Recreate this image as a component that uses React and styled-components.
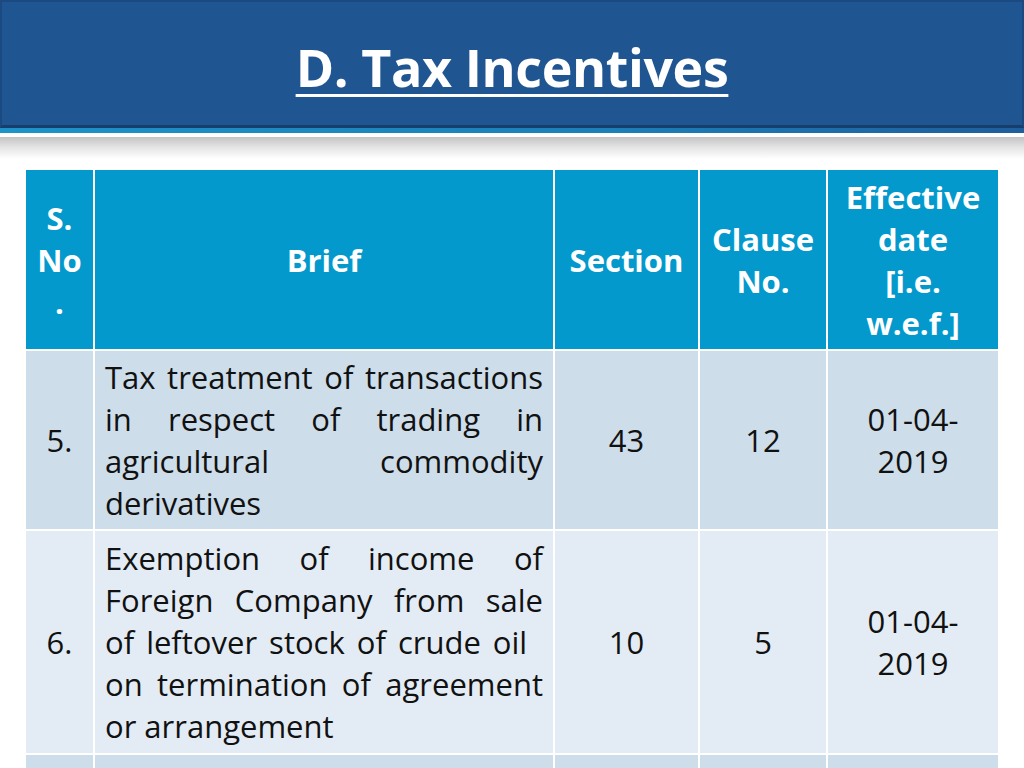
import styled, { createGlobalStyle } from 'styled-components';

const GlobalStyle = createGlobalStyle`
    html, body {
        margin: 0;
        padding: 0;
        background: #ffffff;
        overflow: hidden;
    }
    body {
        width: 1024px;
        height: 768px;
        font-family: "Open Sans", "Noto Sans", sans-serif;
    }
`

// each brief line: [text, justified?, extra word spacing]
const rows = [
    {
        no: '5.',
        brief: [
            ['Tax treatment of transactions', true],
            ['in respect of trading in', true],
            ['agricultural commodity', true],
            ['derivatives', false],
        ],
        section: '43',
        clause: '12',
        date: ['01-04-', '2019'],
    },
    {
        no: '6.',
        brief: [
            ['Exemption of income of', true],
            ['Foreign Company from sale', true],
            ['of leftover stock of crude oil', false, 4],
            ['on termination of agreement', true],
            ['or arrangement', false],
        ],
        section: '10',
        clause: '5',
        date: ['01-04-', '2019'],
    },
]

const App = () => {
    return (
        <Slide>
            <GlobalStyle />
            <TitleBar>
                <Title>D. Tax Incentives</Title>
            </TitleBar>
            <Stripe />
            <Shade />
            <TableWrap>
                <Table>
                    <colgroup>
                        <col style={{ width: 68 }} />
                        <col style={{ width: 460 }} />
                        <col style={{ width: 145 }} />
                        <col style={{ width: 128 }} />
                        <col style={{ width: 171 }} />
                    </colgroup>
                    <thead>
                        <tr>
                            <Th>S.<br />No<br />.</Th>
                            <Th>Brief</Th>
                            <Th>Section</Th>
                            <Th>Clause<br />No.</Th>
                            <Th>Effective<br />date<br />[i.e.<br />w.e.f.]</Th>
                        </tr>
                    </thead>
                    <tbody>
                        {rows.map((row, i) => (
                            <tr key={row.no}>
                                <Td shade={i % 2} height={i === 0 ? 180 : 224}>{row.no}</Td>
                                <BriefCell shade={i % 2}>
                                    {row.brief.map(([line, justify, spacing], j) => (
                                        <BriefLine key={j} justify={justify} spacing={spacing}>{line}</BriefLine>
                                    ))}
                                </BriefCell>
                                <Td shade={i % 2}>{row.section}</Td>
                                <Td shade={i % 2}>{row.clause}</Td>
                                <Td shade={i % 2}>{row.date[0]}<br />{row.date[1]}</Td>
                            </tr>
                        ))}
                        <tr>
                            <Td shade={0} height={60}></Td>
                            <Td shade={0}></Td>
                            <Td shade={0}></Td>
                            <Td shade={0}></Td>
                            <Td shade={0}></Td>
                        </tr>
                    </tbody>
                </Table>
            </TableWrap>
        </Slide>
    );
}

const Slide = styled.div`
    width: 1024px;
    height: 768px;
    overflow: hidden;
    display: flex;
    flex-direction: column;
    & > * { flex-shrink: 0; }
`

const TitleBar = styled.div`
    height: 128px;
    box-sizing: border-box;
    background: #1f5591;
    border: 2px solid #1a4a80;
    border-bottom: 3px solid #163f6d;
    display: flex;
    justify-content: center;
    align-items: flex-start;
`

const Title = styled.h1`
    margin: 30px 0 0;
    font-family: "Open Sans", "Noto Sans", sans-serif;
    font-size: 52px;
    font-weight: 700;
    line-height: 70px;
    color: #ffffff;
    text-decoration: underline;
    text-decoration-thickness: 3px;
    text-underline-offset: 7px;
    letter-spacing: -0.4px;
`

const Stripe = styled.div`
    height: 5px;
    background: linear-gradient(to right, #1c93c9 0%, #1b7fb8 60%, #1e5e9c 100%);
    margin-bottom: 4px;
`

const Shade = styled.div`
    height: 22px;
    background: linear-gradient(to bottom, #c4c4c4 0%, #e6e6e6 50%, #ffffff 100%);
`

const TableWrap = styled.div`
    padding: 11px 0 0 26px;
`

const Table = styled.table`
    width: 972px;
    table-layout: fixed;
    border-collapse: collapse;
`

const Th = styled.th`
    height: 180px;
    box-sizing: border-box;
    padding: 4px 4px;
    background: #0399cc;
    color: #ffffff;
    font-size: 31px;
    font-weight: 700;
    line-height: 42px;
    text-align: center;
    vertical-align: middle;
    border: 2px solid #ffffff;
    border-top: none;
    &:first-child { border-left: none; }
    &:last-child { border-right: none; }
`

const Td = styled.td`
    height: ${(props) => props.height ? `${props.height}px` : 'auto'};
    box-sizing: border-box;
    padding: 4px 4px;
    background: ${(props) => props.shade ? '#e3ecf4' : '#cddde9'};
    color: #111111;
    font-size: 31px;
    font-weight: 400;
    line-height: 42px;
    text-align: center;
    vertical-align: middle;
    border: 2px solid #ffffff;
    &:first-child { border-left: none; }
    &:last-child { border-right: none; }
`

const BriefCell = styled(Td)`
    padding: 4px 10px;
    text-align: left;
`

const BriefLine = styled.div`
    text-align: ${(props) => props.justify ? 'justify' : 'left'};
    text-align-last: ${(props) => props.justify ? 'justify' : 'left'};
    word-spacing: ${(props) => props.spacing ? `${props.spacing}px` : 'normal'};
    white-space: nowrap;
`

export default App;
